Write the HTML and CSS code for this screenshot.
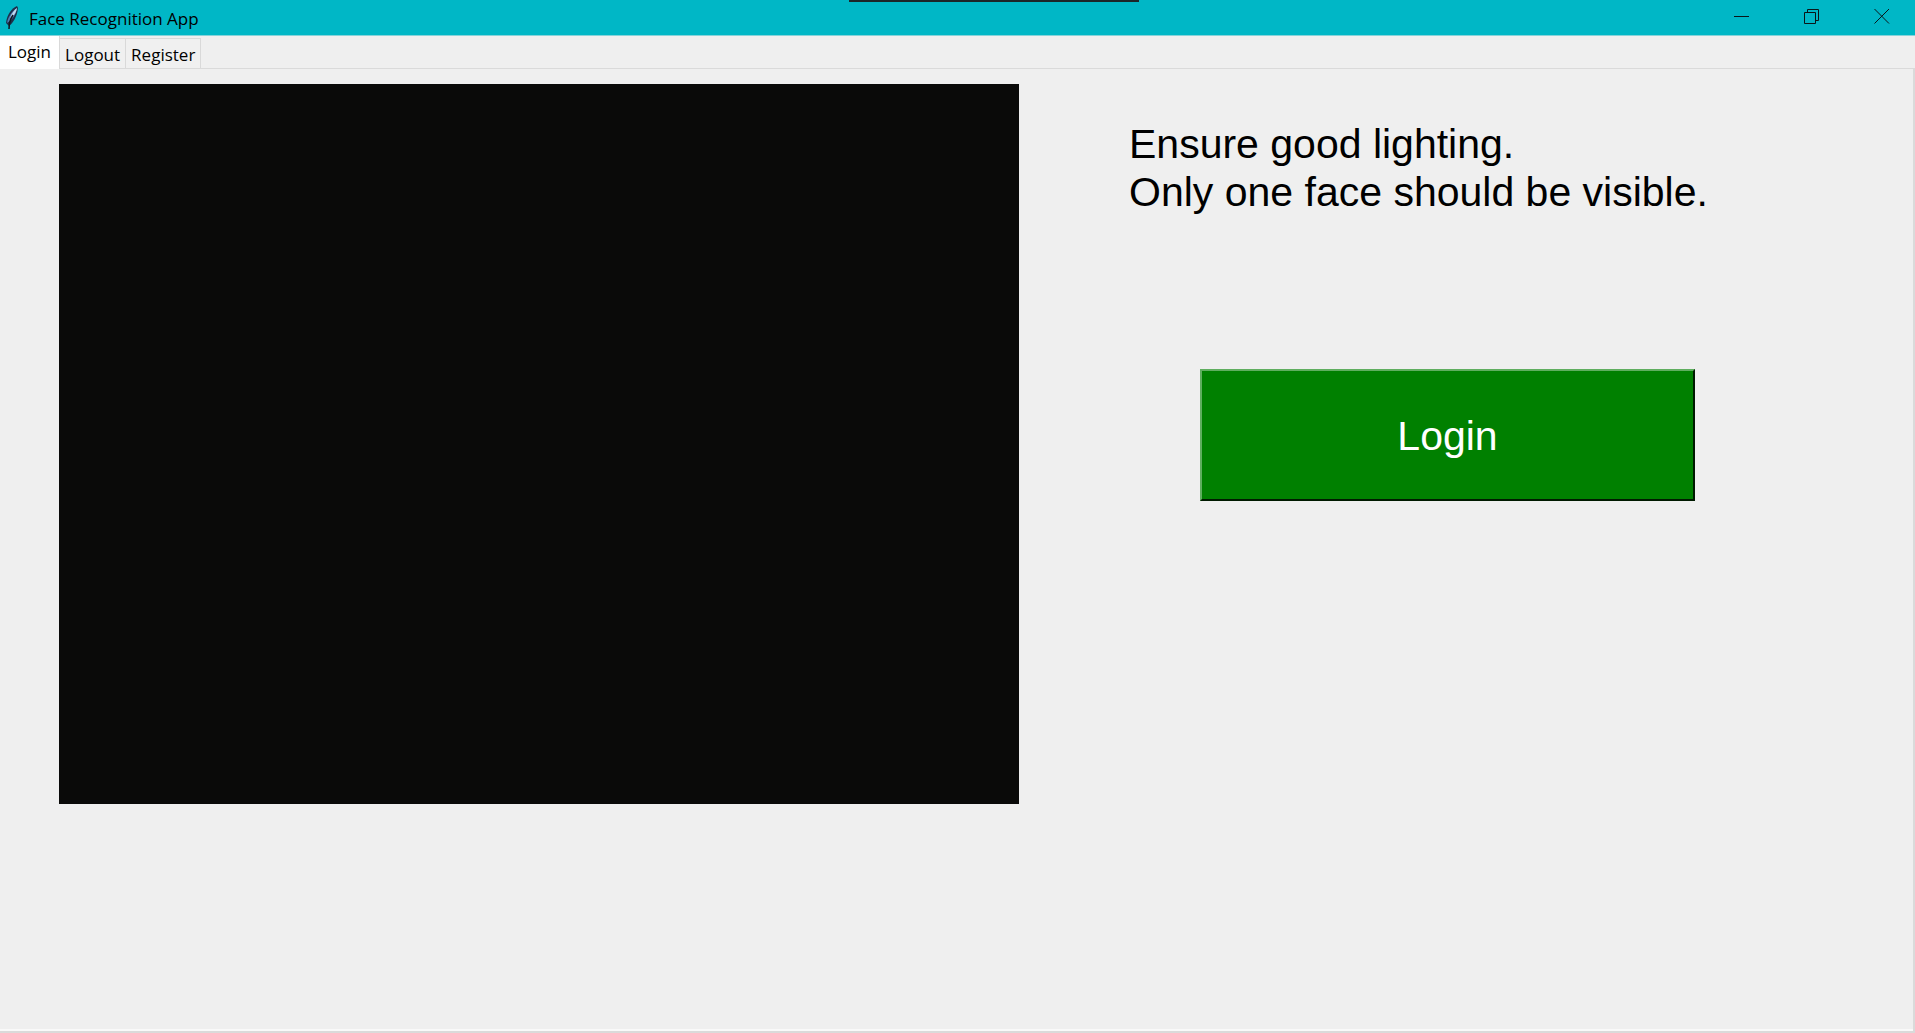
FILE: index.html
```html
<!DOCTYPE html>
<html lang="en">
<head>
<meta charset="utf-8">
<title>Face Recognition App</title>
<link rel="stylesheet" href="styles.css">
</head>
<body>
<header class="titlebar">
  <svg class="feather" width="16" height="24" viewBox="0 0 16 24" aria-hidden="true">
    <path d="M12 0 C7 2 2 8 1 17 L4 20 C8 17 12 11 13 2 Z" fill="#1d2f4a"/>
    <path d="M12 2 C7 5 3 11 2 17 C7 14 11 9 12 2 Z" fill="#4f7fb4"/>
    <path d="M12 2 C9 4 7 7 5 12 L8 10 C10 8 11 6 12 2 Z" fill="#c3d8ec"/>
    <path d="M8 9 C6 12 4 17 4 23" fill="none" stroke="#101820" stroke-width="1.5"/>
  </svg>
  <h1 class="title">Face Recognition App</h1>
  <div class="controls">
    <button class="control" type="button" aria-label="Minimize">
      <svg width="16" height="16" viewBox="0 0 16 16"><path d="M0 8.500H15"/></svg>
    </button>
    <button class="control" type="button" aria-label="Restore">
      <svg width="16" height="16" viewBox="0 0 16 16"><path d="M.5 4.500H11.500V15.500H.5ZM3.500 4.500V1.500H14.500V12.500H11.500"/></svg>
    </button>
    <button class="control" type="button" aria-label="Close">
      <svg width="16" height="16" viewBox="0 0 16 16"><path d="M.5 1L15 15.500M15 1L.5 15.500"/></svg>
    </button>
  </div>
  <span class="handle"></span>
</header>
<nav class="tabs" role="tablist">
  <button class="tab active" type="button" role="tab" aria-selected="true">Login</button>
  <button class="tab" type="button" role="tab" aria-selected="false">Logout</button>
  <button class="tab" type="button" role="tab" aria-selected="false">Register</button>
</nav>
<main class="pane">
  <div class="camera" role="img" aria-label="Camera preview"></div>
  <section class="side">
    <p class="hint">Ensure good lighting.<br>Only one face should be visible.</p>
    <button class="login" type="button">Login</button>
  </section>
</main>
</body>
</html>
```
FILE: styles.css
```css
* {
  box-sizing: border-box;
}

body {
  margin: 0;
  min-height: 100vh;
  display: flex;
  flex-direction: column;
  background: #efefef;
  color: #000;
  font-family: "Open Sans", "Noto Sans", sans-serif;
}

button {
  font-family: inherit;
  color: inherit;
}

.titlebar {
  position: relative;
  display: flex;
  align-items: center;
  height: 36px;
  padding-left: 5px;
  background: #00b7c6;
  border-bottom: 1px solid #86d3da;
}

.title {
  margin: 0 0 0 8px;
  padding-top: 2px;
  font-size: 17px;
  line-height: 24px;
  font-weight: 400;
}

.controls {
  display: flex;
  align-self: stretch;
  margin-left: auto;
}

.control {
  display: flex;
  align-items: center;
  justify-content: center;
  width: 70px;
  padding: 0 0 4px 3px;
  border: 0;
  background: none;
}

.control svg {
  fill: none;
  stroke: #0a1518;
}

.handle {
  position: absolute;
  top: 0;
  left: 50%;
  width: 290px;
  height: 2px;
  margin-left: -109px;
  background: #1c2628;
}

.tabs {
  display: flex;
  align-items: flex-end;
  height: 32px;
}

.tab {
  height: 30px;
  padding: 2px 5px 0;
  border: 1px solid #d9d9d9;
  border-left: 0;
  border-bottom: 0;
  background: #f0f0f0;
  font-size: 17px;
  line-height: 24px;
}

.tab.active {
  position: relative;
  height: 33px;
  padding: 0 8px 1px;
  margin-bottom: -1px;
  border: 0;
  border-right: 1px solid #d9d9d9;
  background: #fff;
}

.pane {
  flex: 1;
  display: flex;
  align-items: flex-start;
  gap: 110px;
  padding: 15px 59px;
  border-top: 1px solid #dadada;
  border-right: 2px solid #dadada;
  border-bottom: 2px solid #dadada;
  box-shadow: inset 0 -2px #f9f9f9;
}

.camera {
  flex: 0 1 960px;
  aspect-ratio: 4 / 3;
  background: #0a0a09;
}

.side {
  flex: 1;
  display: flex;
  flex-direction: column;
  gap: 153px;
  padding-top: 36px;
}

.hint {
  margin: 0;
  font-family: "Liberation Sans", Arial, sans-serif;
  font-size: 41px;
  line-height: 48px;
}

.login {
  width: 495px;
  max-width: 100%;
  height: 132px;
  margin-left: 71px;
  padding: 2px 0 0;
  border: 2px solid;
  border-color: #5fae5f #001a00 #001a00 #5fae5f;
  background: #008000;
  color: #fff;
  font-family: "Liberation Sans", Arial, sans-serif;
  font-size: 41px;
  line-height: 48px;
}
```
